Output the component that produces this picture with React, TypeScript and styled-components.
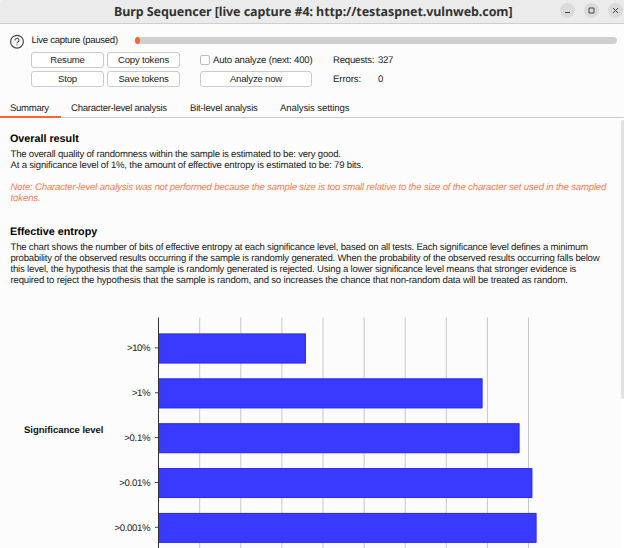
import React from "react";
import styled, { createGlobalStyle } from "styled-components";

const GlobalStyle = createGlobalStyle`
  * { box-sizing: border-box; }
  html, body { margin: 0; background: #fcfcfc; overflow: hidden; }
  body {
    font-family: "Liberation Sans", Arial, sans-serif;
    font-size: 9.6px;
    color: #1c1c1c;
    text-rendering: geometricPrecision;
  }
`;

const Window = styled.div`
  width: 624px;
  height: 548px;
  display: flex;
  flex-direction: column;
  overflow: hidden;
  background: #fcfcfc;
`;

const TitleBar = styled.header`
  display: grid;
  grid-template-columns: 114px 1fr auto;
  align-items: center;
  height: 24px;
  flex: none;
  padding-right: 1px;
  background: #ebebeb;
  border-bottom: 1px solid #cfcfcf;
  border-top-left-radius: 2px;
`;

const Title = styled.h1`
  grid-column: 2;
  margin: 0;
  font: 700 12.5px/22px "Noto Sans", "Open Sans", sans-serif;
  letter-spacing: -0.08px;
  color: #333;
  white-space: nowrap;
`;

const WindowControls = styled.div`
  display: flex;
  gap: 9px;
  padding-bottom: 2px;
`;

const RoundButton = styled.button`
  width: 15px;
  height: 15px;
  padding: 0;
  border: 0;
  border-radius: 50%;
  background: #dadada;
  display: grid;
  place-items: center;
`;

const Controls = styled.section`
  display: grid;
  grid-template-columns: 22px 1fr;
  height: 74px;
  flex: none;
  padding: 10px 7px 0 9px;
`;

const ControlRows = styled.div`
  display: flex;
  flex-direction: column;
  gap: 5px;
`;

const ProgressRow = styled.div`
  display: flex;
  align-items: center;
  height: 13px;
`;

const ProgressLabel = styled.span`
  width: 104px;
  padding-left: 0.5px;
  line-height: 11px;
  white-space: nowrap;
`;

const Track = styled.div`
  flex: 1;
  height: 7px;
  border-radius: 4px;
  background: #cfcfcf;
`;

const Progress = styled.div`
  width: 5px;
  height: 7px;
  border-radius: 50%;
  background: #ff6633;
`;

const ActionGrid = styled.div`
  display: grid;
  grid-template-columns: 73px 73px 129px 60px auto;
  grid-template-rows: 16px 16px;
  row-gap: 3px;
  column-gap: 3px;
  align-items: center;
`;

const Button = styled.button<{ $inset?: number }>`
  height: 16px;
  margin: 0 0 0 ${(p) => p.$inset ?? 0}px;
  padding: 0 0 2px;
  border: 1px solid #cbcbcb;
  border-radius: 3px;
  background: #fff;
  color: inherit;
  font: inherit;
  white-space: nowrap;
`;

const CheckLabel = styled.label`
  display: flex;
  align-items: center;
  gap: 3px;
  margin-left: 17px;
  white-space: nowrap;
`;

const CheckBox = styled.span`
  width: 10px;
  height: 10px;
  flex: none;
  border: 1px solid #bdbdbd;
  border-radius: 2px;
  background: #fff;
`;

const StatLabel = styled.span`
  margin-left: 18px;
  white-space: nowrap;
`;

const Text = styled.span<{ $spacing: number }>`
  letter-spacing: ${(p) => p.$spacing}px;
`;

const Tabs = styled.nav`
  display: flex;
  height: 20px;
  flex: none;
  border-bottom: 1px solid #c9c9c9;
`;

const Tab = styled.span<{ $width: number; $spacing: number; $active?: boolean }>`
  width: ${(p) => p.$width}px;
  height: 20px;
  padding-left: 10px;
  line-height: 22px;
  letter-spacing: ${(p) => p.$spacing}px;
  white-space: nowrap;
  border-bottom: 2px solid ${(p) => (p.$active ? "#ff6633" : "transparent")};
`;

const Viewport = styled.main`
  display: grid;
  grid-template-columns: 1fr 3px;
  flex: 1;
  min-height: 0;
`;

const Report = styled.article`
  padding: 15px 0 0 10px;
  min-width: 0;
  overflow: hidden;
`;

const ScrollTrack = styled.div`
  background: #fff;
  padding-top: 2px;
`;

const ScrollThumb = styled.div`
  height: 279px;
  background: #e2e2e2;
  border-radius: 2px 0 0 2px;
`;

const Heading = styled.h2`
  margin: 0;
  height: 16px;
  font-size: 10.75px;
  line-height: 13px;
  color: #000;
`;

const Paragraph = styled.p<{ $gap: number; $note?: boolean }>`
  margin: 0 0 ${(p) => p.$gap}px;
  padding-left: 0.5px;
  color: ${(p) => (p.$note ? "#ff7a50" : "inherit")};
  font-style: ${(p) => (p.$note ? "italic" : "normal")};
`;

const Line = styled.span<{ $spacing?: number }>`
  display: block;
  height: 11.1px;
  line-height: 11.1px;
  white-space: nowrap;
  letter-spacing: ${(p) => p.$spacing ?? 0}px;
`;

const Chart = styled.svg`
  display: block;
  margin-left: -10px;
  font-family: "Liberation Sans", Arial, sans-serif;
`;

const bars = [
  { label: ">10%", end: 306, labelX: 127 },
  { label: ">1%", end: 482.5, labelX: 132 },
  { label: ">0.1%", end: 519.5, labelX: 124.3 },
  { label: ">0.01%", end: 532.3, labelX: 119.3 },
  { label: ">0.001%", end: 536.5, labelX: 114.5 },
];

function HelpIcon() {
  return (
    <svg width="16" height="16" viewBox="0 0 16 16" fill="none" stroke="#4a4a4a">
      <circle cx="8" cy="7.7" r="6.4" strokeWidth="1.2" />
      <path d="M6 6.5a2 1.9 0 1 1 3.1 1.3C8.3 8.3 8 8.5 8 9.2" strokeWidth="1.1" />
      <circle cx="8" cy="10.8" r=".65" fill="#4a4a4a" stroke="none" />
    </svg>
  );
}

function EntropyChart() {
  return (
    <Chart width="620" height="236" viewBox="0 312 620 236">
      {Array.from({ length: 9 }, (_, i) => {
        const x = 199.7 + i * 41.1;
        return <line key={i} x1={x} x2={x} y1="317.5" y2="548" stroke="#c7c7c7" />;
      })}
      {bars.map((bar, i) => {
        const y = 333.5 + i * 44.85;
        return (
          <g key={bar.label}>
            <rect x="159" y={y} width={bar.end - 159} height="30" fill="#3939ff" />
            <path d={`M159 ${y + 0.6}H${bar.end - 0.5}V${y + 29.4}H159`} fill="none" stroke="#2929f0" strokeWidth=".7" />
            <line x1="155" x2="158" y1={y + 14.4} y2={y + 14.4} stroke="#444" />
            <text x={bar.labelX} y={y + 17.9} fontSize="9.6" fill="#222" textLength={150.5 - bar.labelX}>
              {bar.label}
            </text>
          </g>
        );
      })}
      <line x1="158.5" x2="158.5" y1="317.5" y2="548" stroke="#333" />
      <text x="24" y="433" fontSize="9.5" fontWeight="700" fill="#111" textLength="79.5">
        Significance level
      </text>
    </Chart>
  );
}

export default function App() {
  return (
    <Window>
      <GlobalStyle />
      <TitleBar>
        <Title>Burp Sequencer [live capture #4: http://testaspnet.vulnweb.com]</Title>
        <WindowControls>
          {["M5 9.5H10", "M5 5H10V10H5Z", "M5 5L10 10M10 5L5 10"].map((d) => (
            <RoundButton key={d}>
              <svg width="15" height="15" fill="none" stroke="#444" strokeWidth="1">
                <path d={d} />
              </svg>
            </RoundButton>
          ))}
        </WindowControls>
      </TitleBar>
      <Controls>
        <HelpIcon />
        <ControlRows>
          <ProgressRow>
            <ProgressLabel>
              <Text $spacing={-0.31}>Live capture (paused)</Text>
            </ProgressLabel>
            <Track>
              <Progress />
            </Track>
          </ProgressRow>
          <ActionGrid>
            <Button><Text $spacing={-0.2}>Resume</Text></Button>
            <Button><Text $spacing={-0.2}>Copy tokens</Text></Button>
            <CheckLabel>
              <CheckBox />
              <Text $spacing={-0.19}>Auto analyze (next: 400)</Text>
            </CheckLabel>
            <StatLabel><Text $spacing={-0.22}>Requests:</Text></StatLabel>
            <Text $spacing={-0.3}>327</Text>
            <Button><Text $spacing={-0.15}>Stop</Text></Button>
            <Button><Text $spacing={-0.25}>Save tokens</Text></Button>
            <Button $inset={17}><Text $spacing={-0.2}>Analyze now</Text></Button>
            <StatLabel><Text $spacing={-0.1}>Errors:</Text></StatLabel>
            <span>0</span>
          </ActionGrid>
        </ControlRows>
      </Controls>
      <Tabs>
        <Tab $width={61} $spacing={-0.32} $active>Summary</Tab>
        <Tab $width={119} $spacing={-0.27}>Character-level analysis</Tab>
        <Tab $width={90} $spacing={-0.21}>Bit-level analysis</Tab>
        <Tab $width={90} $spacing={-0.12}>Analysis settings</Tab>
      </Tabs>
      <Viewport>
        <Report>
          <Heading>Overall result</Heading>
          <Paragraph $gap={11}>
            <Line $spacing={-0.226}>The overall quality of randomness within the sample is estimated to be: very good.</Line>
            <Line $spacing={-0.193}>At a significance level of 1%, the amount of effective entropy is estimated to be: 79 bits.</Line>
          </Paragraph>
          <Paragraph $gap={21.3} $note>
            <Line $spacing={-0.18}>Note: Character-level analysis was not performed because the sample size is too small relative to the size of the character set used in the sampled</Line>
            <Line $spacing={-0.12}>tokens.</Line>
          </Paragraph>
          <Heading>Effective entropy</Heading>
          <Paragraph $gap={25.7}>
            <Line $spacing={-0.213}>The chart shows the number of bits of effective entropy at each significance level, based on all tests. Each significance level defines a minimum</Line>
            <Line $spacing={-0.224}>probability of the observed results occurring if the sample is randomly generated. When the probability of the observed results occurring falls below</Line>
            <Line $spacing={-0.2}>this level, the hypothesis that the sample is randomly generated is rejected. Using a lower significance level means that stronger evidence is</Line>
            <Line $spacing={-0.197}>required to reject the hypothesis that the sample is random, and so increases the chance that non-random data will be treated as random.</Line>
          </Paragraph>
          <EntropyChart />
        </Report>
        <ScrollTrack>
          <ScrollThumb />
        </ScrollTrack>
      </Viewport>
    </Window>
  );
}
